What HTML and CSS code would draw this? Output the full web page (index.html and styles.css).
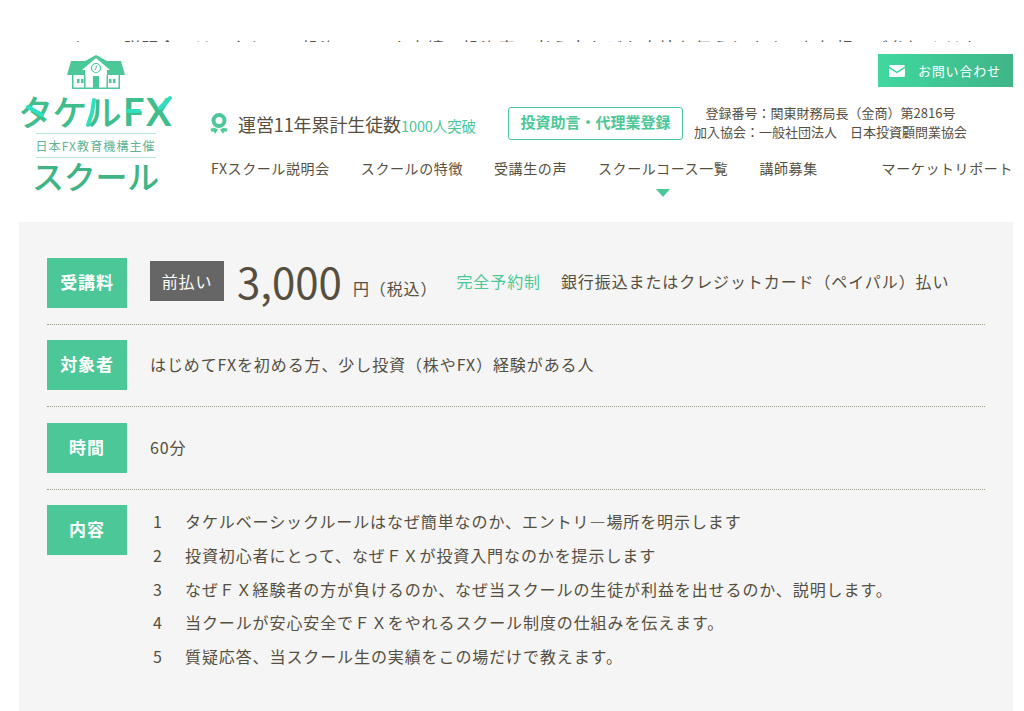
FILE: index.html
```html
<!DOCTYPE html>
<html lang="ja">
<head>
  <meta charset="UTF-8">
  <meta name="viewport" content="width=device-width, initial-scale=1.0">
  <title>タケルFX スクール</title>
  <link rel="stylesheet" href="styles.css">
</head>
<body>
  <div class="peek">
    <p>スクール説明会では、タケルの投資ルールや実績、投資家の考え方などを直接お伝えします。お気軽にご参加ください。</p>
  </div>

  <header class="site-header">
    <a class="logo" href="#">
      <svg class="logo-house" width="60" height="35" viewBox="0 0 60 35">
        <path fill="#4cc797" d="M30 0 L41 6 H55 L59 20 H54 V34 H6 V20 H1 L5 6 H19 Z"/>
        <rect x="7.500" y="20" width="45" height="12.500" fill="#fff"/>
        <path fill="#fff" d="M30 3 L44 15 H41 V32 H19 V15 H16 Z"/>
        <rect x="11" y="24" width="2.500" height="4" fill="#4cc797"/>
        <rect x="15" y="24" width="2.500" height="4" fill="#4cc797"/>
        <rect x="43" y="24" width="2.500" height="4" fill="#4cc797"/>
        <rect x="47" y="24" width="2.500" height="4" fill="#4cc797"/>
        <rect x="27" y="21" width="6" height="13" fill="#4cc797"/>
        <rect x="18" y="20" width="1.500" height="13" fill="#4cc797"/>
        <rect x="40.500" y="20" width="1.500" height="13" fill="#4cc797"/>
        <circle cx="30" cy="13" r="4.500" fill="#fff" stroke="#4cc797" stroke-width="1.200"/>
        <path d="M30.800 10.500 L29.200 15" stroke="#4cc797" stroke-width="1" fill="none"/>
      </svg>
      <span class="logo-name">タケル<span class="logo-fx">FX</span></span>
      <span class="logo-sub">日本FX教育機構主催</span>
      <span class="logo-school">スクール</span>
      <svg class="logo-accents" width="155" height="100" viewBox="0 0 155 100">
        <path d="M10 65 L24 73 M76 58 L74 71 L70 83 M110 69 H121 M152 56 L142 66"/>
      </svg>
    </a>

    <div class="header-main">
      <div class="contact-row">
        <a class="contact-btn" href="#">
          <svg width="16" height="12" viewBox="0 0 16 12">
            <path fill="#fff" d="M1.500 0 H14.500 A1.500 1.500 0 0 1 16 1.500 L8 6.500 L0 1.500 A1.500 1.500 0 0 1 1.500 0 Z"/>
            <path fill="#fff" d="M0 3.300 L8 8.300 L16 3.300 V10.500 A1.500 1.500 0 0 1 14.500 12 H1.500 A1.500 1.500 0 0 1 0 10.500 Z"/>
          </svg>
          お問い合わせ
        </a>
      </div>

      <div class="info-row">
        <svg class="ribbon" width="18" height="21" viewBox="0 0 18 21">
          <circle cx="9" cy="7.500" r="5.500" fill="none" stroke="#4cc797" stroke-width="4"/>
          <path fill="#4cc797" d="M0.500 15.500 L5 15 L8 16.500 L5 21 L4 18.500 L1.500 18.800 Z M17.500 15.500 L13 15 L10 16.500 L13 21 L14 18.500 L16.500 18.800 Z"/>
        </svg>
        <p class="students">運営11年累計生徒数<span>1000人突破</span></p>
        <a class="reg-btn" href="#">投資助言・代理業登録</a>
        <p class="reg-text">登録番号：関東財務局長（金商）第2816号<br>加入協会：一般社団法人　日本投資顧問業協会</p>
      </div>

      <nav class="main-nav">
        <a href="#">FXスクール説明会</a>
        <a href="#">スクールの特徴</a>
        <a href="#">受講生の声</a>
        <a href="#" class="active">スクールコース一覧</a>
        <a href="#">講師募集</a>
        <a href="#" class="nav-last">マーケットリポート</a>
      </nav>
    </div>
  </header>

  <main class="course">
    <div class="course-row">
      <div class="course-label">受講料</div>
      <div class="price">
        <span class="prepay">前払い</span>
        <span class="amount">3,000</span>
        <span class="yen">円（税込）</span>
        <span class="reserve">完全予約制</span>
        <span class="pay">銀行振込またはクレジットカード（ペイパル）払い</span>
      </div>
    </div>
    <div class="course-row">
      <div class="course-label">対象者</div>
      <p class="course-text">はじめてFXを初める方、少し投資（株やFX）経験がある人</p>
    </div>
    <div class="course-row">
      <div class="course-label">時間</div>
      <p class="course-text">60分</p>
    </div>
    <div class="course-row last">
      <div class="course-label">内容</div>
      <ol class="course-list">
        <li><span>1</span>タケルベーシックルールはなぜ簡単なのか、エントリ―場所を明示します</li>
        <li><span>2</span>投資初心者にとって、なぜＦＸが投資入門なのかを提示します</li>
        <li><span>3</span>なぜＦＸ経験者の方が負けるのか、なぜ当スクールの生徒が利益を出せるのか、説明します。</li>
        <li><span>4</span>当クールが安心安全でＦＸをやれるスクール制度の仕組みを伝えます。</li>
        <li><span>5</span>質疑応答、当スクール生の実績をこの場だけで教えます。</li>
      </ol>
    </div>
  </main>
</body>
</html>
```

FILE: styles.css
```css
html, body {
  height: 100%;
}
body {
  margin: 0;
  font-family: "Noto Sans CJK JP", "Noto Sans", sans-serif;
  color: #564f3f;
  background-color: #fff;
  overflow: hidden;
}
a {
  color: inherit;
  text-decoration: none;
}
p {
  margin: 0;
}

/* text scrolled behind the header, only its top edge shows */
.peek {
  height: 42px;
  overflow: hidden;
  padding: 0 0 0 52px;
  box-sizing: border-box;
}
.peek p {
  padding-top: 36px;
  font-size: 17px;
  line-height: 24px;
  letter-spacing: 0.05em;
  white-space: nowrap;
}

.site-header {
  display: flex;
  height: 180px;
  padding: 0 11px 0 18px;
}
.logo {
  position: relative;
  width: 155px;
  display: flex;
  flex-direction: column;
  align-items: center;
  color: #3fbd8c;
  padding-top: 13px;
  flex-shrink: 0;
}
.logo-house {
  display: block;
}
.logo-name {
  font-size: 35px;
  line-height: 38px;
  font-weight: 500;
  white-space: nowrap;
  letter-spacing: -0.02em;
  margin-top: 2px;
}
.logo-fx {
  font-family: "Lato", sans-serif;
  font-weight: 700;
  font-size: 38px;
  letter-spacing: 0.04em;
  margin-left: 2px;
}
.logo-sub {
  width: 120px;
  border-top: 1px solid #b5e6d2;
  border-bottom: 1px solid #b5e6d2;
  font-size: 12px;
  line-height: 23px;
  text-align: center;
  white-space: nowrap;
  color: #5fb393;
  margin-top: 3px;
  letter-spacing: 1.100px;
}
.logo-school {
  font-size: 32px;
  line-height: 34px;
  font-weight: 500;
  color: #3fb586;
  white-space: nowrap;
  letter-spacing: -0.3px;
}
.logo-accents {
  position: absolute;
  left: 0;
  top: 0;
  fill: none;
  stroke: #2fe0c0;
  stroke-width: 4;
  stroke-linecap: round;
  stroke-linejoin: round;
}

.header-main {
  flex: 1;
  padding-left: 38px;
  display: flex;
  flex-direction: column;
}
.contact-row {
  display: flex;
  justify-content: flex-end;
  padding-top: 12px;
}
.contact-btn {
  display: flex;
  align-items: center;
  gap: 13px;
  width: 135px;
  height: 33px;
  box-sizing: border-box;
  padding-left: 11px;
  background: linear-gradient(to right, #40d89f, #40b588);
  color: #fff;
  font-size: 13px;
  letter-spacing: 0.8px;
  white-space: nowrap;
}

.info-row {
  display: flex;
  align-items: center;
  height: 33px;
  margin-top: 20px;
}
.ribbon {
  flex-shrink: 0;
  margin-left: -1px;
}
.students {
  margin-left: 10px;
  font-size: 18px;
  white-space: nowrap;
  letter-spacing: -0.1px;
}
.students span {
  font-size: 14.500px;
  color: #4cc797;
}
.reg-btn {
  margin-left: 32px;
  width: 175px;
  height: 33px;
  box-sizing: border-box;
  border: 1px solid #4cc797;
  border-radius: 3px;
  color: #4cc797;
  font-size: 15px;
  font-weight: 700;
  line-height: 28px;
  text-align: center;
  white-space: nowrap;
}
.reg-text {
  margin: -4px 0 0 11px;
  font-size: 13px;
  line-height: 19px;
  text-align: center;
  white-space: nowrap;
}

.main-nav {
  display: flex;
  gap: 31px;
  margin-top: 17px;
  font-size: 14px;
  line-height: 22px;
  letter-spacing: 0.6px;
  white-space: nowrap;
}
.main-nav .active {
  position: relative;
}
.main-nav .active::after {
  content: "";
  position: absolute;
  left: 58px;
  top: 32px;
  border-style: solid;
  border-width: 8px 7.500px 0;
  border-color: #4cc797 transparent transparent;
}
.nav-last {
  margin-left: auto;
}

.course {
  margin: 0 11px 0 19px;
  padding: 36px 28px 0;
  height: 489px;
  box-sizing: border-box;
  background-color: #f5f5f5;
  font-size: 16px;
  letter-spacing: 0.9px;
}
.course-row {
  display: flex;
  padding-bottom: 16px;
  margin-bottom: 15.330px;
  border-bottom: 1px dotted #9a9a8a;
}
.course-row.last {
  border-bottom: none;
  margin-bottom: 0;
}
.course-label {
  width: 80px;
  height: 50px;
  flex-shrink: 0;
  margin-right: 23px;
  background-color: #4cc797;
  color: #fff;
  font-size: 17px;
  font-weight: 700;
  line-height: 48px;
  text-align: center;
}
.price {
  display: flex;
  align-items: center;
  height: 46px;
  white-space: nowrap;
}
.prepay {
  width: 74px;
  height: 40px;
  background-color: #666;
  color: #fff;
  font-size: 16px;
  line-height: 40px;
  text-align: center;
}
.amount {
  margin-left: 13px;
  font-size: 42px;
  line-height: 50px;
  letter-spacing: 0;
  margin-top: -1px;
}
.yen {
  margin-left: 11px;
  margin-top: 14px;
}
.reserve {
  margin-left: 19px;
  margin-right: 20px;
  color: #4cc797;
}
.course-text {
  line-height: 48px;
}
.course-list {
  list-style: none;
  margin: 0;
  padding: 0;
  line-height: 33.800px;
}
.course-list li {
  display: flex;
  white-space: nowrap;
}
.course-list span {
  width: 35px;
  padding-left: 3px;
  box-sizing: border-box;
}
```
